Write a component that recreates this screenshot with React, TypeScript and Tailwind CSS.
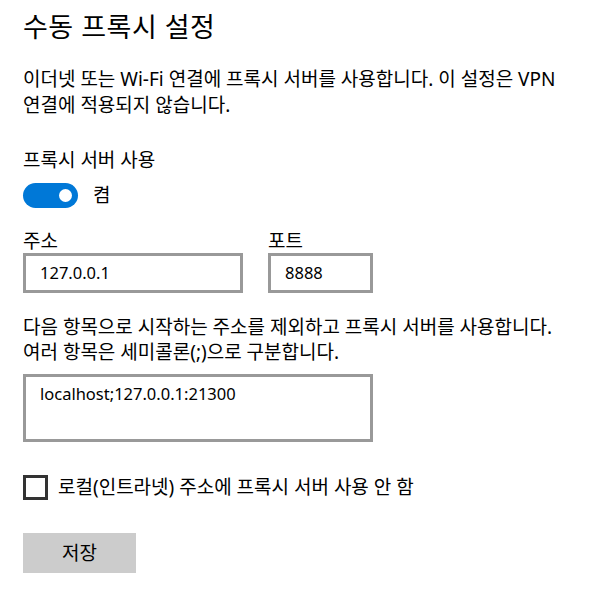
const font = "font-['Noto_Sans','Noto_Sans_CJK_KR',sans-serif]";

function Toggle() {
  return (
    <div className="flex h-[25px] w-[55px] items-center justify-end rounded-full bg-[#0078d7] pr-[6px]">
      <div className="h-[13px] w-[13px] rounded-full bg-white" />
    </div>
  );
}

export default function App() {
  return (
    <div className={`${font} h-[601px] w-[603px] bg-white pl-[23px] pt-[9px] text-black`}>
      <h1 className="text-[27px] leading-[36px] font-normal tracking-[0.5px]">수동 프록시 설정</h1>

      <p className="mt-[21px] text-[19px] leading-[26px]">
        이더넷 또는 Wi-Fi 연결에 프록시 서버를 사용합니다. 이 설정은 VPN
        <br />
        연결에 적용되지 않습니다.
      </p>

      <div className="mt-[29px] text-[19px] leading-[26px]">프록시 서버 사용</div>

      <div className="mt-[10px] flex items-center gap-[15px]">
        <Toggle />
        <span className="text-[19px] leading-[25px]">켬</span>
      </div>

      {/* Address + port */}
      <div className="mt-[22px] flex gap-[25px]">
        <div className="flex flex-col">
          <label className="text-[19px] leading-[23px]">주소</label>
          <div className="flex h-[40px] w-[220px] items-center border-[3px] border-[#999999] px-[14px] text-[16.5px]">
            127.0.0.1
          </div>
        </div>
        <div className="flex flex-col">
          <label className="text-[19px] leading-[23px]">포트</label>
          <div className="flex h-[40px] w-[105px] items-center border-[3px] border-[#999999] px-[14px] text-[16.5px]">
            8888
          </div>
        </div>
      </div>

      <p className="mt-[22px] text-[19px] leading-[25px]">
        다음 항목으로 시작하는 주소를 제외하고 프록시 서버를 사용합니다.
        <br />
        여러 항목은 세미콜론(;)으로 구분합니다.
      </p>

      <div className="mt-[9px] h-[68px] w-[350px] border-[3px] border-[#999999] px-[14px] pt-[5px] text-[16.5px] leading-[24px]">
        localhost;127.0.0.1:21300
      </div>

      <div className="mt-[33px] flex items-center gap-[10px]">
        <div className="h-[25px] w-[25px] border-[3px] border-[#333333] bg-white" />
        <span className="text-[19px] leading-[25px]">로컬(인트라넷) 주소에 프록시 서버 사용 안 함</span>
      </div>

      <button className="mt-[33px] flex h-[40px] w-[113px] items-center justify-center bg-[#cccccc] text-[19px]">
        저장
      </button>
    </div>
  );
}
